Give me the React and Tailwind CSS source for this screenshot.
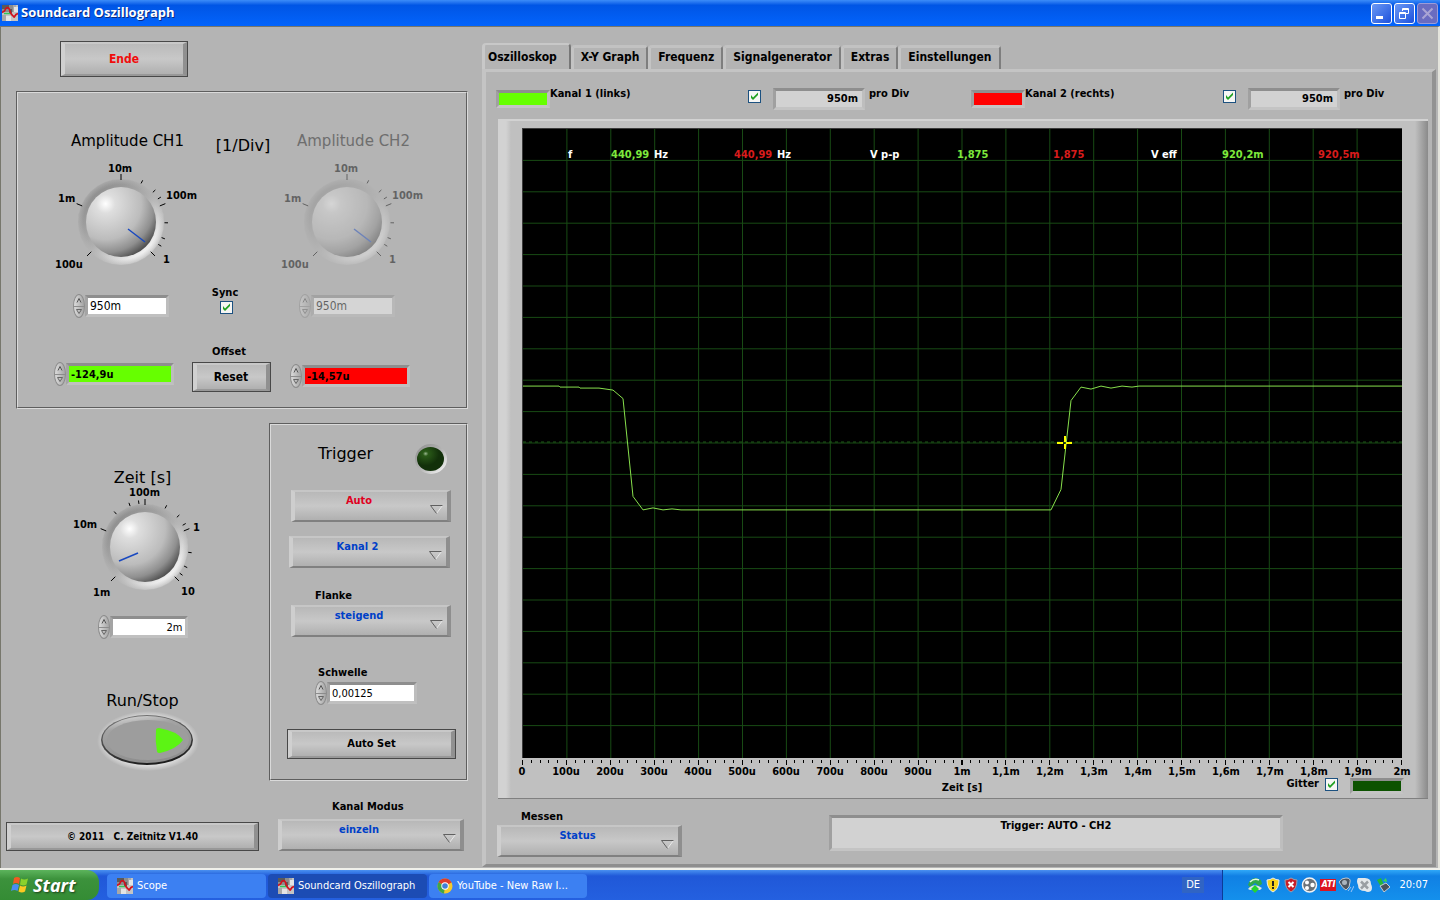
import React, { useState } from 'react';

const CH_TICKS = {
  major: [-135, -67.5, 0, 67.5, 135],
  minor: [27.5, 47, 58, 91, 111, 121],
};

const ZEIT_TICKS = {
  major: [-135, -67.5, 0, 67.5, 135],
  minor: [-41, -20, -8, 27.5, 47, 60, 97, 116, 127],
};

const CH_LABELS = [
  { text: '10m', x: -13, y: -50 },
  { text: '1m', x: -63, y: -20 },
  { text: '100m', x: 45, y: -23 },
  { text: '1', x: 42, y: 41 },
  { text: '100u', x: -66, y: 46 },
];

const ZEIT_LABELS = [
  { text: '100m', x: -16, y: -51 },
  { text: '10m', x: -72, y: -19 },
  { text: '1', x: 48, y: -16 },
  { text: '10', x: 36, y: 48 },
  { text: '1m', x: -52, y: 49 },
];

const AXIS = ['0', '100u', '200u', '300u', '400u', '500u', '600u', '700u', '800u', '900u', '1m',
  '1,1m', '1,2m', '1,3m', '1,4m', '1,5m', '1,6m', '1,7m', '1,8m', '1,9m', '2m'];

const TRACE = '0,257.5 36,257.5 37,258.5 56,258.5 57,259.5 76,259.5 90,261.5 100,270 110,368 120,381.5 130,379.5 140,381.5 149,380.5 158,381.5 528,381.5 538,361 548,272 558,258.5 568,260.5 578,257.5 588,259.5 599,257.5 609,258.5 616,257.5 879,257.5';

// Rotary knob with scale, origin in the middle of the cap
const Knob = ({ id, ticks, labels, pointer, disabled }) => {
  const tick = (deg, r1, r2) => {
    const a = (deg * Math.PI) / 180;
    return (
      <line key={deg} x1={r1 * Math.sin(a)} y1={-r1 * Math.cos(a)} x2={r2 * Math.sin(a)} y2={-r2 * Math.cos(a)} stroke="#000" />
    );
  };
  return (
    <svg width="150" height="121" viewBox="-75 -71 150 121" className={disabled ? 'overflow-visible opacity-45' : 'overflow-visible'}>
      <defs>
        <linearGradient id={`${id}-ring`} x1="0.15" y1="0.1" x2="0.85" y2="0.9">
          <stop offset="0" stopColor="#8a8a8a" />
          <stop offset="0.5" stopColor="#b0b0b0" />
          <stop offset="0.8" stopColor="#dedede" />
          <stop offset="1" stopColor="#fff" />
        </linearGradient>
        <radialGradient id={`${id}-fade`}>
          <stop offset="0.86" stopColor="#b4b4b4" stopOpacity="0" />
          <stop offset="1" stopColor="#b4b4b4" stopOpacity="0.8" />
        </radialGradient>
        <radialGradient id={`${id}-cap`} cx="0.28" cy="0.24" r="0.85">
          <stop offset="0" stopColor="#fff" />
          <stop offset="0.16" stopColor="#dedede" />
          <stop offset="0.6" stopColor="#bcbcbc" />
          <stop offset="0.82" stopColor="#8f8f8f" />
          <stop offset="1" stopColor="#484848" />
        </radialGradient>
      </defs>
      <circle r="43" fill={`url(#${id}-ring)`} />
      <circle r="43.5" fill={`url(#${id}-fade)`} />
      <circle r="35" fill={`url(#${id}-cap)`} />
      <line x1={pointer[0]} y1={pointer[1]} x2={pointer[2]} y2={pointer[3]} stroke="#1848c0" strokeWidth="1.5" />
      {ticks.major.map((d) => tick(d, 42, 48))}
      {ticks.minor.map((d) => tick(d, 43.5, 47))}
      <g className="fill-black text-[11px] font-bold">
        {labels.map((l) => (
          <text key={l.text} x={l.x} y={l.y}>{l.text}</text>
        ))}
      </g>
    </svg>
  );
};

// Number field with the oval up/down buttons
const Spin = ({ label, value, field = 'bg-white', width = 'w-[84px]', disabled }) => (
  <div className={`flex h-6 items-center ${disabled ? 'opacity-45' : ''}`}>
    <div className="flex h-6 w-3 flex-col overflow-hidden rounded-[50%] border border-[#8c8c8c] bg-gradient-to-r from-[#dcdcdc] to-[#a4a4a4]">
      <button aria-label={`${label} erhöhen`} className="flex flex-1 items-center justify-center border-b border-[#8c8c8c]">
        <svg width="6" height="5" viewBox="0 0 6 5"><path d="M1 4.5 3 .5 5 4.5" fill="none" stroke="#555" /></svg>
      </button>
      <button aria-label={`${label} verringern`} className="flex flex-1 items-center justify-center">
        <svg width="6" height="5" viewBox="0 0 6 5"><path d="M.5.5h5L3 4.5z" fill="none" stroke="#666" /></svg>
      </button>
    </div>
    <input
      aria-label={label}
      defaultValue={value}
      disabled={disabled}
      className={`h-[22px] border-[3px] border-t-[#8e8e8e] border-r-[#bdbdbd] border-b-[#c0c0c0] border-l-[#a4a4a4] px-0.5 text-black ${width} ${field}`}
    />
  </div>
);

const BevelButton = ({ className, children }) => (
  <button className={`border border-[#484848] ${className}`}>
    <span className="flex h-full items-center justify-center border-t-2 border-r-4 border-b-2 border-l-4 border-t-[#c8c8c8] border-r-[#909090] border-b-[#989898] border-l-[#d0d0d0] bg-gradient-to-b from-[#bababa] via-[#c8c8c8] to-[#b0b0b0]">
      {children}
    </span>
  </button>
);

const Ring = ({ label, options, className }) => (
  <div className="relative">
    <select
      aria-label={label}
      className={`block h-8 appearance-none border-t-2 border-r-4 border-b-2 border-l-4 border-t-[#c6c6c6] border-r-[#8e8e8e] border-b-[#808080] border-l-[#cecece] bg-gradient-to-b from-[#b8b8b8] via-[#c8c8c8] to-[#b0b0b0] pr-6 pb-2.5 font-bold [text-align-last:center] ${className}`}
    >
      {options.map((o) => <option key={o}>{o}</option>)}
    </select>
    <svg width="13" height="9" viewBox="0 0 13 9" className="pointer-events-none absolute right-2 bottom-2">
      <path d="M12.5.5 6.5 8.5" stroke="#e8e8e8" />
      <path d="M6.5 8.5.5.5h12" fill="none" stroke="#606060" />
    </svg>
  </div>
);

const Check = ({ label }) => {
  const [on, setOn] = useState(true);
  return (
    <span className="relative block h-[13px] w-[13px] shrink-0">
      <input
        type="checkbox"
        aria-label={label}
        checked={on}
        onChange={() => setOn(!on)}
        className="block h-[13px] w-[13px] appearance-none border border-[#1c5180] bg-[#f6f6f4]"
      />
      {on && (
        <svg width="13" height="13" viewBox="0 0 13 13" className="pointer-events-none absolute inset-0">
          <path d="M3 5v3l2 2 5-5V2.5L5 7.5z" fill="#21a121" />
        </svg>
      )}
    </span>
  );
};

const Sunken = ({ className, children }) => (
  <div className={`border-[3px] border-t-[#8e8e8e] border-r-[#bebebe] border-b-[#c4c4c4] border-l-[#a0a0a0] ${className}`}>{children}</div>
);

const Frame = ({ className, children }) => (
  <section className={`border border-[#5e5e5e] border-r-[#dadada] border-b-[#dadada] ${className}`}>
    <div className="h-full border border-[#dadada] border-r-[#5e5e5e] border-b-[#5e5e5e]">{children}</div>
  </section>
);

const Heading = ({ className, children }) => (
  <h2 className={`font-['DejaVu_Sans',sans-serif] leading-5 font-normal whitespace-nowrap ${className}`}>{children}</h2>
);

const ScopeIcon = () => (
  <svg width="16" height="16" viewBox="0 0 16 16" className="shrink-0">
    <path fill="#c4c4c4" d="M0 0h16v16H0z" />
    <path fill="#8c8c8c" d="M0 0h11v7H0z" />
    <path fill="#5a5a5a" d="M0 0h7v4H0zM7 4h3v4H7z" />
    <path fill="#a8a8a8" d="M11 0h3v7h-3zM0 10h4v6H0z" />
    <path fill="#e4e4e4" d="M4 11h5v5H4zM12 2h4v5h-4z" />
    <path d="M2 8.5h7" stroke="#35c558" strokeWidth="1.5" />
    <path d="M0 7.5 2.5 6Q4 2.5 5.5 2.5T8 6t2.5 4.5 1.5 1.5T14 9.5L16 8.5" fill="none" stroke="#d40f1c" strokeWidth="1.7" />
  </svg>
);

const WindowsLogo = () => (
  <svg width="19" height="18" viewBox="0 0 19 18">
    <path d="M4 2q3-2 6 0L9 8Q6 6 3 8z" fill="#f25a22" />
    <path d="M11 2.5q3 2 7 0L16.5 8.5q-3 2-6.5 0z" fill="#8bd22c" />
    <path d="M2.5 9q3-2 6.5 0L7.5 15q-3-2-6.5 0z" fill="#4a8df2" />
    <path d="M10 9.5q3 2 6.5 0L15 15.5q-3 2-6.5 0z" fill="#fcc922" />
  </svg>
);

const ChromeIcon = () => (
  <svg width="16" height="16" viewBox="0 0 16 16" className="shrink-0">
    <circle cx="8" cy="8" r="7.5" fill="#f3cb2c" />
    <path d="M8 8 1.5 4.2A7.5 7.5 0 0 1 14.5 4.5z" fill="#dd3c2c" />
    <path d="M8 8 1.5 4.2A7.5 7.5 0 0 0 7 15.4z" fill="#3fa648" />
    <circle cx="8" cy="8" r="3.7" fill="#fff" />
    <circle cx="8" cy="8" r="2.8" fill="#3f7fd8" />
  </svg>
);

const TrayIcons = () => (
  <div className="flex items-center gap-0.5">
    <svg width="16" height="16" viewBox="0 0 16 16">
      <path d="M1 8Q3 1 9 1l5 2 1 4-3 2-4-3-5 4z" fill="#2fa84a" />
      <path d="M3 5q4-4 9-2" stroke="#e4f8e6" fill="none" strokeWidth="1.5" />
      <path d="M1 12q6-7 14-1l-2 2H3z" fill="#dfe6e2" />
      <path d="m8 8 4 4-4 4-4-4z" fill="#26d430" />
    </svg>
    <svg width="16" height="16" viewBox="0 0 16 16">
      <path d="M8 1q3 2 6 2 0 9-6 12Q2 12 2 3q3 0 6-2z" fill="#f7d31c" stroke="#e9edf2" />
      <path d="M7 4h2v5H7zm0 6h2v2H7z" fill="#222" />
    </svg>
    <svg width="16" height="16" viewBox="0 0 16 16">
      <path d="M8 1q3 2 6 2 0 9-6 12Q2 12 2 3q3 0 6-2z" fill="#c81e28" stroke="#9aa2ae" />
      <path d="m5.5 5 5 5m0-5-5 5" stroke="#fff" strokeWidth="2" />
    </svg>
    <svg width="17" height="16" viewBox="0 0 17 16">
      <circle cx="8.5" cy="8" r="7" fill="#6c7278" stroke="#f2f2f2" strokeWidth="1.5" />
      <circle cx="6" cy="5.5" r="2" fill="#fff" />
      <circle cx="11.5" cy="8" r="2.2" fill="#fff" />
      <circle cx="6" cy="11" r="2" fill="#fff" />
    </svg>
    <span className="flex h-3 w-4 items-center justify-center bg-[#dc1420] text-[9px] font-bold text-white italic">ATI</span>
    <svg width="16" height="16" viewBox="0 0 16 16">
      <path d="M1 5Q3 1 8 1t4 4q0 6-4 8-3-1-7-8z" fill="#4c5560" stroke="#c3c9cf" />
      <circle cx="6.5" cy="5.5" r="2.5" fill="#aab4bd" />
      <path d="m10 14 3-4m0 5 3-6" stroke="#9cc4f4" />
    </svg>
    <svg width="17" height="16" viewBox="0 0 17 16">
      <path d="M2 1h7q6 0 6 6 2 4 0 7-3 2-6 0-7 0-7-6Q0 4 2 1z" fill="#e4e8ea" />
      <path d="m5 4.5 7 7m0-7-7 7" stroke="#9a9fa3" strokeWidth="2.5" />
    </svg>
    <svg width="16" height="16" viewBox="0 0 16 16">
      <path d="m2 3 4-2 3 7-3 2z" fill="#25b53a" />
      <path d="m5 9 6-3 4 4-6 5z" fill="#48525c" stroke="#c5cdd4" />
      <path d="m8 4 3-3 1 4z" fill="#3fd850" />
    </svg>
  </div>
);

const Channel = ({ id, title, className, children, disabled }) => (
  <div className={`flex flex-col items-start pt-[38px] ${className}`}>
    <Heading className={`ml-[25px] text-[15px] ${disabled ? 'text-[#6e6e6e]' : ''}`}>{title}</Heading>
    <Knob id={id} ticks={CH_TICKS} labels={CH_LABELS} pointer={[7, 7, 24, 20]} disabled={disabled} />
    <div className="mt-[22px] ml-[27px]">
      <Spin label={title} value="950m" field="bg-white text-xs" disabled={disabled} />
    </div>
    {children}
  </div>
);

const KanalInfo = ({ name, color }) => (
  <div className="flex items-start">
    <Sunken className="mt-1 h-[18px] w-[54px]"><div className={`h-full ${color}`} /></Sunken>
    <span className="w-[198px] leading-4">{name}</span>
    <div className="mt-1"><Check label={`${name} anzeigen`} /></div>
    <Sunken className="mt-0.5 ml-3 w-[92px] bg-[#d2d2d2] pr-1 text-right leading-4">950m</Sunken>
    <span className="ml-1 leading-4">pro Div</span>
  </div>
);

const Scope = () => (
  <div className="relative flex flex-1 flex-col border-t border-l border-[#3c3c3c] bg-black">
    <svg viewBox="0 0 879 630" preserveAspectRatio="none" className="h-0 min-h-0 w-full grow" shapeRendering="crispEdges">
      {AXIS.slice(1, -1).map((t, i) => (
        <path key={t} d={`M${(i + 1) * 43.9} 0V630`} stroke="#184a14" />
      ))}
      {Array.from({ length: 19 }, (_, i) => (
        <path key={i} d={`M0 ${(i + 1) * 31.45}H879`} stroke="#184a14" />
      ))}
      <path d="M0 313.5H879" stroke="#1f5a18" strokeDasharray="3 3" />
      <polyline points={TRACE} fill="none" stroke="#88e04c" />
      <path d="M541.5 307v6m0 3v5M534 314.5h6m3 0h6" stroke="#ff0" strokeWidth="2" />
    </svg>
    <div className="absolute inset-x-0 top-[18px] flex pl-[45px] leading-4 text-white">
      <span className="w-[43px]">f</span>
      <span className="w-[43px] text-[#7ee83c]">440,99</span>
      <span className="w-[80px]">Hz</span>
      <span className="w-[43px] text-[#d81c1c]">440,99</span>
      <span className="w-[93px]">Hz</span>
      <span className="w-[87px]">V p-p</span>
      <span className="w-[96px] text-[#7ee83c]">1,875</span>
      <span className="w-[98px] text-[#d81c1c]">1,875</span>
      <span className="w-[71px]">V eff</span>
      <span className="w-[96px] text-[#7ee83c]">920,2m</span>
      <span className="text-[#d81c1c]">920,5m</span>
    </div>
  </div>
);

const TABS = ['Oszilloskop', 'X-Y Graph', 'Frequenz', 'Signalgenerator', 'Extras', 'Einstellungen'];

const App = () => {
  const [tab, setTab] = useState('Oszilloskop');
  const [running, setRunning] = useState(true);

  return (
    <div className="flex min-h-screen flex-col bg-[#b4b4b4] font-['DejaVu_Sans_Condensed','DejaVu_Sans',sans-serif] text-[11px] text-black">
      {/* Title bar */}
      <header className="flex h-[26px] items-center bg-gradient-to-b from-[#3c8cf8] via-[#0055e5] via-20% to-[#0364fc] pl-0.5">
        <ScopeIcon />
        <h1 className="ml-[3px] flex-1 font-['Open_Sans',sans-serif] text-[13px] font-bold text-white [text-shadow:1px_1px_#0a2a80]">Soundcard Oszillograph</h1>
        <div className="flex gap-0.5 pr-0.5">
          <button aria-label="Minimieren" className="h-[21px] w-[21px] rounded-[3px] border border-white bg-gradient-to-br from-[#6c98f4] to-[#1d4fdc]">
            <svg width="19" height="19" viewBox="0 0 19 19"><path d="M4 12h7v3H4z" fill="#fff" /></svg>
          </button>
          <button aria-label="Wiederherstellen" className="h-[21px] w-[21px] rounded-[3px] border border-white bg-gradient-to-br from-[#6c98f4] to-[#1d4fdc]">
            <svg width="19" height="19" viewBox="0 0 19 19" fill="none" stroke="#fff">
              <path d="M7.5 7V4.5h6v5H11M7 5.5h7M4.5 8.5h6v6h-6zM4 9.5h7" />
            </svg>
          </button>
          <button aria-label="Schließen" className="h-[21px] w-[21px] rounded-[3px] border border-[#9c9cd8] bg-[#6a6cc0]">
            <svg width="19" height="19" viewBox="0 0 19 19"><path d="m4.5 4.5 10 10m0-10-10 10" stroke="#a9a4d4" strokeWidth="2" /></svg>
          </button>
        </div>
      </header>

      <main className="flex flex-1 border-t border-r-2 border-l border-t-[#77776c] border-r-[#e4e4dc] border-l-[#77776c]">
        {/* Controls */}
        <div className="flex w-[481px] shrink-0 flex-col pt-3.5 pr-3.5 pl-[5px]">
          <BevelButton className="ml-[54px] h-9 w-32 text-xs font-bold text-[#f00c0c]">Ende</BevelButton>

          <Frame className="mt-3.5 ml-2.5">
            <div className="grid grid-cols-[174px_78px_1fr] pb-[15px]">
              <Channel id="ch1" title="Amplitude CH1" className="pl-7">
                <div className="mt-11 ml-2 font-bold">
                  <Spin label="Offset CH1" value="-124,9u" field="bg-[#66ff00]" width="w-[108px]" />
                </div>
              </Channel>
              <div className="flex flex-col items-center pt-[43px] font-bold">
                <Heading className="ml-6 text-base">[1/Div]</Heading>
                <span className="mt-[129px] -ml-3 leading-4">Sync</span>
                <div className="-ml-2.5"><Check label="Sync" /></div>
                <span className="mt-[30px] -ml-1 leading-4">Offset</span>
                <BevelButton className="mt-0.5 h-[30px] w-[79px] text-xs">Reset</BevelButton>
              </div>
              <Channel id="ch2" title="Amplitude CH2" className="pl-0.5" disabled>
                <div className="mt-[46px] ml-[18px] font-bold">
                  <Spin label="Offset CH2" value="-14,57u" field="bg-[#ff0000]" width="w-[108px]" />
                </div>
              </Channel>
            </div>
          </Frame>

          <div className="mt-3.5 flex">
            <div className="ml-2.5 flex w-[253px] flex-col items-center pt-[45px]">
              <Heading className="text-base">Zeit [s]</Heading>
              <div className="-mt-3 ml-1">
                <Knob id="zeit" ticks={ZEIT_TICKS} labels={ZEIT_LABELS} pointer={[-26, 14, -7, 6]} />
              </div>
              <div className="mt-[18px]">
                <Spin label="Zeit" value="2m" field="bg-white text-right" width="w-[78px]" />
              </div>
              <Heading className="mt-[52px] text-base">Run/Stop</Heading>
              <button aria-label="Run/Stop" aria-pressed={running} onClick={() => setRunning(!running)} className="-mt-0.5 ml-2">
                <svg width="106" height="62" viewBox="0 0 106 62">
                  <defs>
                    <radialGradient id="halo">
                      <stop offset="0.8" stopColor="#e0e0e0" />
                      <stop offset="1" stopColor="#b4b4b4" />
                    </radialGradient>
                    <linearGradient id="rim" x1="0.2" y1="0" x2="0.5" y2="1">
                      <stop offset="0" stopColor="#7a7a7a" />
                      <stop offset="1" stopColor="#1c1c1c" />
                    </linearGradient>
                    <linearGradient id="face" x1="0" y1="0" x2="0.3" y2="1">
                      <stop offset="0" stopColor="#e2e2e2" />
                      <stop offset="0.3" stopColor="#a4a4a4" />
                      <stop offset="1" stopColor="#8e8e8e" />
                    </linearGradient>
                  </defs>
                  <ellipse cx="54" cy="32" rx="51" ry="30" fill="url(#halo)" />
                  <ellipse cx="53" cy="31" rx="46" ry="25" fill="url(#rim)" />
                  <ellipse cx="53" cy="30.5" rx="44.5" ry="23.5" fill="url(#face)" />
                  <ellipse cx="54" cy="31" rx="41" ry="20" fill="#9d9d9d" />
                  <path d="M62 21q0-2 3-2 18 3 24 12-6 9-23 13-3 0-3-2-2-10-1-21z" fill={running ? '#5cf414' : '#5a7a4a'} />
                </svg>
              </button>
            </div>

            <Frame className="w-[199px]">
              <div className="flex flex-col items-start pt-[17px] pb-5 pl-5 font-bold">
                <div className="ml-[27px] flex items-start gap-[34px]">
                  <Heading className="w-[61px] pt-0.5 text-base">Trigger</Heading>
                  <svg width="36" height="34" viewBox="0 0 36 34">
                    <defs>
                      <linearGradient id="led-ring" x1="0" y1="0" x2="1" y2="1">
                        <stop offset="0" stopColor="#8c8c8c" />
                        <stop offset="0.5" stopColor="#b4b4b4" />
                        <stop offset="1" stopColor="#fff" />
                      </linearGradient>
                      <radialGradient id="led" cx="0.32" cy="0.28">
                        <stop offset="0" stopColor="#9ab890" />
                        <stop offset="0.2" stopColor="#2a5a18" />
                        <stop offset="1" stopColor="#12300a" />
                      </radialGradient>
                    </defs>
                    <ellipse cx="18" cy="17" rx="16" ry="15" fill="url(#led-ring)" />
                    <ellipse cx="17.5" cy="17" rx="13.5" ry="12" fill="url(#led)" />
                  </svg>
                </div>
                <div className="mt-3.5"><Ring label="Trigger Modus" options={['Auto', 'Normal', 'Einzeln']} className="w-40 text-[#e0001e]" /></div>
                <div className="mt-3.5 -ml-0.5"><Ring label="Trigger Kanal" options={['Kanal 2', 'Kanal 1']} className="w-[161px] text-[#0040c8]" /></div>
                <span className="mt-5 mb-px ml-6 leading-4">Flanke</span>
                <Ring label="Flanke" options={['steigend', 'fallend']} className="w-40 text-[#0040c8]" />
                <span className="mt-7 ml-[27px] leading-4">Schwelle</span>
                <div className="ml-6 font-normal">
                  <Spin label="Schwelle" value="0,00125" width="w-[90px]" />
                </div>
                <BevelButton className="mt-6 -ml-1 h-[30px] w-[169px]">Auto Set</BevelButton>
              </div>
            </Frame>
          </div>

          <div className="mt-auto flex items-end pb-[17px] font-bold">
            <BevelButton className="h-[29px] w-[253px] text-[10px] whitespace-pre">{'© 2011   C. Zeitnitz V1.40'}</BevelButton>
            <div className="ml-[19px]">
              <span className="mb-1 ml-[54px] block leading-4">Kanal Modus</span>
              <Ring label="Kanal Modus" options={['einzeln', 'CH1 + CH2', 'CH1 - CH2']} className="w-[186px] text-[#0040c8]" />
            </div>
          </div>
        </div>

        {/* Tabs */}
        <div className="flex min-w-0 flex-1 flex-col pt-4 pr-0.5 pb-px font-bold">
          <nav role="tablist" className="flex items-end text-xs">
            {TABS.map((t) => (
              <button
                key={t}
                role="tab"
                aria-selected={t === tab}
                onClick={() => setTab(t)}
                className={
                  t === tab
                    ? 'h-[26px] rounded-t-sm border-t-2 border-r-2 border-l-3 border-t-[#c8c8c8] border-r-[#777] border-l-[#c8c8c8] pr-3 pb-px pl-[3px]'
                    : 'h-6 rounded-t-sm border-t-3 border-r-2 border-l-3 border-t-[#c2c2c2] border-r-[#7e7e7e] border-l-[#c4c4c4] px-[7px] pb-[3px]'
                }
              >
                {t}
              </button>
            ))}
          </nav>

          <div className="flex flex-1 flex-col border-t-3 border-r-4 border-b-3 border-l-4 border-t-[#c4c4c4] border-r-[#929292] border-b-[#8e8e8e] border-l-[#c4c4c4]">
            <div className="grid h-[47px] grid-cols-[475px_1fr] pt-3.5 pl-2.5">
              <KanalInfo name="Kanal 1 (links)" color="bg-[#66ff00]" />
              <KanalInfo name="Kanal 2 (rechts)" color="bg-[#ff0000]" />
            </div>

            {/* Graph */}
            <div className="mr-1 ml-3 flex flex-1 flex-col border-t-2 border-b border-t-[#d2d2d2] border-b-[#808080] bg-[linear-gradient(to_right,#d2d2d2_8px,#c0c0c0_13px,#c0c0c0_calc(100%-13px),#8a8a8a)] pt-[7px] pr-[26px] pl-6">
              <Scope />
              <svg viewBox="0 0 879 8" preserveAspectRatio="none" className="block h-2 w-full overflow-visible" shapeRendering="crispEdges">
                {Array.from({ length: 101 }, (_, i) => (
                  <path key={i} d={`M${i * 8.78 + 0.5} 2v${i % 5 ? 3 : 5}`} stroke="#000" />
                ))}
              </svg>
              <div className="flex justify-between leading-3">
                {AXIS.map((t) => (
                  <span key={t} className="flex w-0 justify-center">{t}</span>
                ))}
              </div>
              <div className="grid h-5 grid-cols-3">
                <span />
                <span className="pt-0.5 text-center">Zeit [s]</span>
                <div className="-mr-0.5 flex items-start justify-end leading-3">
                  <span>Gitter</span>
                  <div className="mr-3 ml-1.5"><Check label="Gitter" /></div>
                  <Sunken className="h-4 w-[54px]"><div className="h-full bg-[#0c5200]" /></Sunken>
                </div>
              </div>
            </div>

            <div className="flex items-start pt-2.5 pb-[7px] pl-[11px]">
              <div>
                <span className="ml-6 block leading-4">Messen</span>
                <Ring label="Messen" options={['Status', 'Amplitude', 'Frequenz']} className="w-[185px] text-[#0040c8]" />
              </div>
              <Sunken className="mt-1.5 mr-[149px] ml-auto h-9 w-[454px] bg-[#d2d2d2] text-center leading-4">Trigger: AUTO - CH2</Sunken>
            </div>
          </div>
        </div>
      </main>

      {/* Taskbar */}
      <footer className="flex h-8 items-stretch border-t-2 border-t-[#f0f0ea] bg-gradient-to-b from-[#4a90f0] via-[#2058d8] via-20% to-[#2460e0] text-white">
        <button className="flex w-[99px] items-center gap-1 rounded-r-xl bg-gradient-to-b from-[#5cb45c] via-[#3c923c] via-30% to-[#348c34] pl-2.5 font-['Open_Sans',sans-serif] text-lg leading-6 font-bold italic [text-shadow:1px_1px_2px_#1c401c]">
          <WindowsLogo />
          Start
        </button>
        <button className="mt-1 mb-0.5 ml-2 flex w-[159px] items-center gap-1 rounded-sm bg-[#3c80f2] pl-2.5"><ScopeIcon />Scope</button>
        <button className="mt-1 mb-0.5 ml-0.5 flex w-[159px] items-center gap-1 rounded-sm bg-[#1c4cb4] pl-2.5 whitespace-nowrap"><ScopeIcon />Soundcard Oszillograph</button>
        <button className="mt-1 mb-0.5 ml-0.5 flex w-[158px] items-center gap-1 rounded-sm bg-[#3c80f2] pl-2 whitespace-nowrap"><ChromeIcon />YouTube - New Raw I...</button>
        <span className="ml-auto self-center bg-[#3064c4] px-1 leading-4">DE</span>
        <div className="ml-[18px] flex w-[218px] items-center justify-end gap-2 border-l border-[#0c3c98] bg-gradient-to-b from-[#30a8f8] via-[#1080e4] via-20% to-[#1490ec] pr-3">
          <TrayIcons />
          <time>20:07</time>
        </div>
      </footer>
    </div>
  );
};

export default App;
